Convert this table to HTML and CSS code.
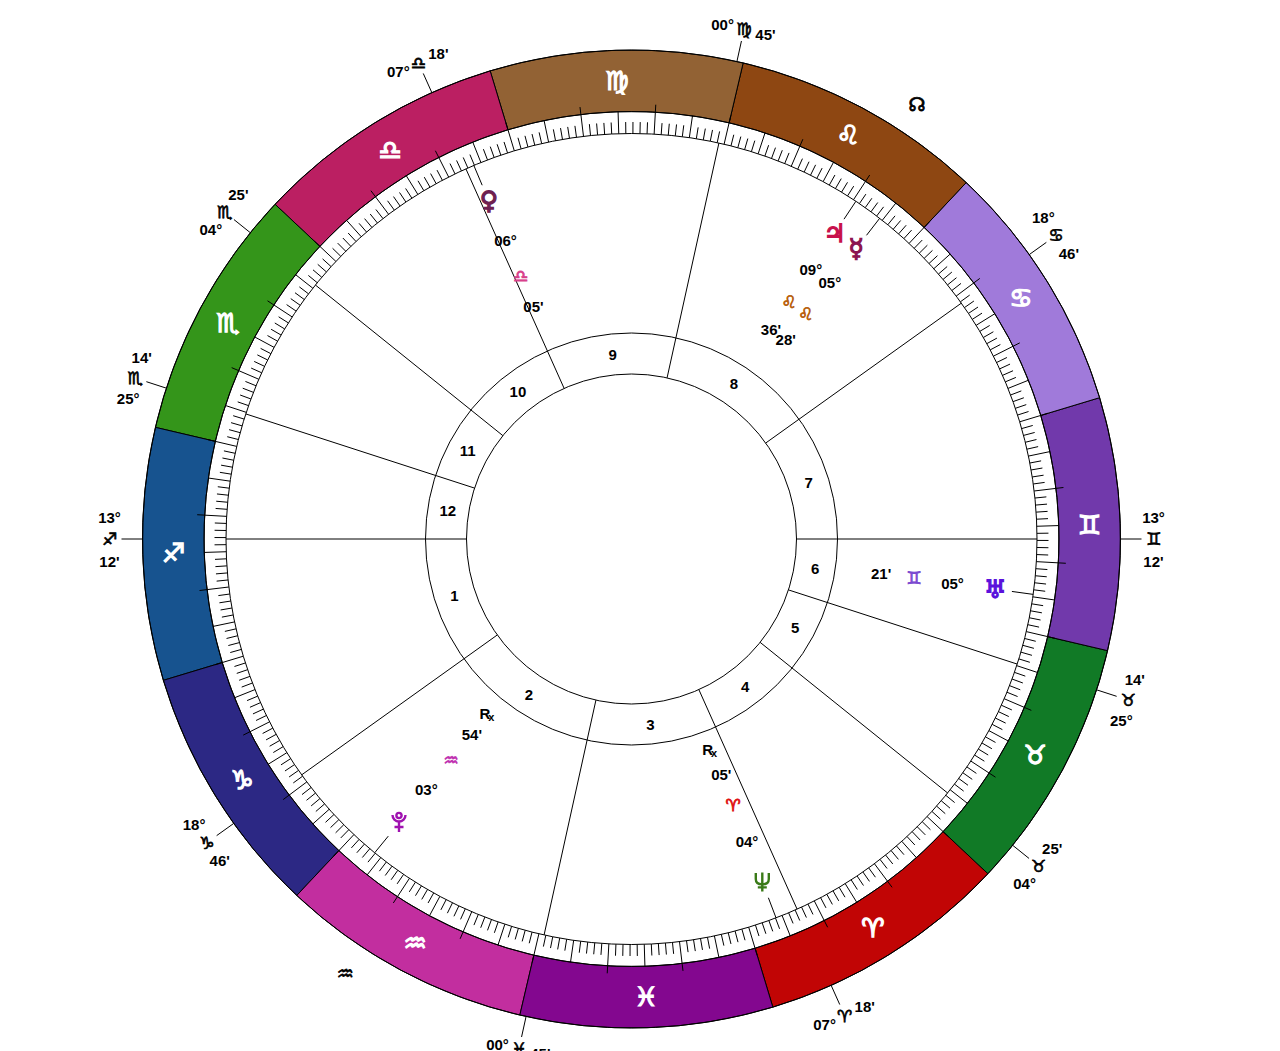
FILE: index.html
```html
<!DOCTYPE html>
<html lang="en">
<head>
<meta charset="utf-8">
<title>Natal chart wheel</title>
<link rel="stylesheet" href="styles.css">
</head>
<body>
<main class="page">
<svg id="chart" class="chart" width="1280" height="1051" viewBox="0 0 1280 1051" xmlns="http://www.w3.org/2000/svg"></svg>
</main>
<script src="script.js"></script>
</body>
</html>
```

FILE: styles.css
```css
html, body {
  margin: 0;
  padding: 0;
  background: #ffffff;
}
.page {
  width: 1280px;
  height: 1051px;
  overflow: hidden;
}
.chart {
  display: block;
  width: 1280px;
  height: 1051px;
}
.band { stroke: #000; stroke-width: 1; }
.aries { fill: #c10505; }
.taurus { fill: #117a26; }
.gemini { fill: #7139ab; }
.cancer { fill: #a07ada; }
.leo { fill: #8e4712; }
.virgo { fill: #926234; }
.libra { fill: #bb1f62; }
.scorpio { fill: #34951a; }
.sagittarius { fill: #17538f; }
.capricorn { fill: #2c2884; }
.aquarius { fill: #c22e9f; }
.pisces { fill: #83078f; }

.ring { fill: none; stroke: #000; stroke-width: 1; }
.tick, .cusp, .pointer { stroke: #000; stroke-width: 1; }

text {
  text-anchor: middle;
  dominant-baseline: central;
}
.lbl {
  font-family: "Liberation Sans", Arial, sans-serif;
  font-weight: bold;
  font-size: 15px;
  fill: #000;
}
.house-num {
  font-family: "Liberation Sans", Arial, sans-serif;
  font-weight: bold;
  font-size: 15px;
  fill: #000;
}
.sym {
  font-family: "DejaVu Sans", sans-serif;
  font-weight: bold;
}
.sign-glyph { font-size: 26px; fill: #ffffff; stroke: #ffffff; stroke-width: 1.3px; }
.cusp-glyph { font-size: 17px; fill: #000; stroke: #000; stroke-width: 0.7px; }
.planet-glyph { font-size: 25px; stroke-width: 1.3px; }
.stack-sign { font-size: 17px; stroke-width: 0.8px; }
.rx {
  font-family: "Liberation Sans", Arial, sans-serif;
  font-weight: bold;
  font-size: 15px;
  fill: #000;
}
.rx-sub { font-size: 11px; }
.node { font-size: 19px; fill: #000; stroke: #000; stroke-width: 0.8px; }
.planet-icon { fill: none; stroke-width: 2.4px; stroke-linecap: butt; }

.c-jup { fill: #c8104c; stroke: #c8104c; }
.c-mer { fill: #8c1450; stroke: #8c1450; }
.c-ven { fill: #6e2050; stroke: #6e2050; }
.c-ura { fill: #5a12dc; stroke: #5a12dc; }
.c-nep { stroke: #3a7a18; }
.c-plu { stroke: #a012b0; }
.t-leo { fill: #b8600c; stroke: #b8600c; }
.t-libra { fill: #d8408a; stroke: #d8408a; }
.t-gemini { fill: #7a48d0; stroke: #7a48d0; }
.t-aries { fill: #e01010; stroke: #e01010; }
.t-aquarius { fill: #c030b0; stroke: #c030b0; }
```

FILE: script.js
```js
(function () {
  var NS = 'http://www.w3.org/2000/svg';
  var svg = document.getElementById('chart');
  var CX = 631.5, CY = 539, ASC = 253.2;
  var R_OUT = 489, R_BAND = 427.5, R_TICK = 405.5, R_H_OUT = 206, R_H_IN = 165;
  var VS = '\uFE0E';
  var SIGNS = ['\u2648', '\u2649', '\u264A', '\u264B', '\u264C', '\u264D', '\u264E', '\u264F', '\u2650', '\u2651', '\u2652', '\u2653'];
  var SIGN_CLS = ['aries', 'taurus', 'gemini', 'cancer', 'leo', 'virgo', 'libra', 'scorpio', 'sagittarius', 'capricorn', 'aquarius', 'pisces'];

  function th(lon) { return 180 + lon - ASC; }
  function pt(t, r) {
    var a = t * Math.PI / 180;
    return [CX + r * Math.cos(a), CY - r * Math.sin(a)];
  }
  function el(tag, attrs, cls, parent) {
    var e = document.createElementNS(NS, tag);
    for (var k in attrs) e.setAttribute(k, attrs[k]);
    if (cls) e.setAttribute('class', cls);
    (parent || svg).appendChild(e);
    return e;
  }
  function group(cls) { return el('g', {}, cls); }
  function rline(t, r1, r2, cls, parent) {
    var a = pt(t, r1), b = pt(t, r2);
    return el('line', { x1: a[0].toFixed(2), y1: a[1].toFixed(2), x2: b[0].toFixed(2), y2: b[1].toFixed(2) }, cls, parent);
  }
  function txt(x, y, s, cls, parent) {
    var e = el('text', { x: x.toFixed(1), y: y.toFixed(1) }, cls, parent);
    e.textContent = s;
    return e;
  }
  function f(p) { return p[0].toFixed(2) + ' ' + p[1].toFixed(2); }

  /* zodiac bands */
  var gBands = group('bands');
  for (var i = 0; i < 12; i++) {
    var t1 = th(30 * i), t2 = th(30 * i + 30);
    var d = 'M ' + f(pt(t1, R_OUT)) +
      ' A ' + R_OUT + ' ' + R_OUT + ' 0 0 0 ' + f(pt(t2, R_OUT)) +
      ' L ' + f(pt(t2, R_BAND)) +
      ' A ' + R_BAND + ' ' + R_BAND + ' 0 0 1 ' + f(pt(t1, R_BAND)) + ' Z';
    el('path', { d: d }, 'band ' + SIGN_CLS[i], gBands);
  }

  /* rings */
  el('circle', { cx: CX, cy: CY, r: R_OUT }, 'ring');
  el('circle', { cx: CX, cy: CY, r: R_BAND }, 'ring');
  el('circle', { cx: CX, cy: CY, r: R_TICK }, 'ring');
  el('circle', { cx: CX, cy: CY, r: R_H_OUT }, 'ring');
  el('circle', { cx: CX, cy: CY, r: R_H_IN }, 'ring');

  /* degree ticks */
  var gTicks = group('ticks');
  for (var dg = 0; dg < 360; dg++) {
    var t = th(dg);
    if (dg % 10 === 0) rline(t, R_TICK, 435, 'tick', gTicks);
    else if (dg % 5 === 0) rline(t, R_TICK, R_BAND, 'tick', gTicks);
    else rline(t, R_TICK, 417, 'tick', gTicks);
  }

  /* sign glyphs in bands */
  var gSigns = group('sign-glyphs');
  for (var j = 0; j < 12; j++) {
    var p = pt(th(30 * j + 15), 458);
    txt(p[0], p[1], SIGNS[j] + VS, 'sym sign-glyph', gSigns);
  }

  /* house cusps */
  var cusps = [
    { lon: 253.2, s: 8, d: '13\u00B0', m: "12'" },
    { lon: 288.767, s: 9, d: '18\u00B0', m: "46'" },
    { lon: 330.75, s: 11, d: '00\u00B0', m: "45'" },
    { lon: 7.3, s: 0, d: '07\u00B0', m: "18'" },
    { lon: 34.417, s: 1, d: '04\u00B0', m: "25'" },
    { lon: 55.233, s: 1, d: '25\u00B0', m: "14'" },
    { lon: 73.2, s: 2, d: '13\u00B0', m: "12'" },
    { lon: 108.767, s: 3, d: '18\u00B0', m: "46'" },
    { lon: 150.75, s: 5, d: '00\u00B0', m: "45'" },
    { lon: 187.3, s: 6, d: '07\u00B0', m: "18'" },
    { lon: 214.417, s: 7, d: '04\u00B0', m: "25'" },
    { lon: 235.233, s: 7, d: '25\u00B0', m: "14'" }
  ];
  var gCusps = group('cusps');
  var gLabels = group('cusp-labels');
  var gHouses = group('house-numbers');
  for (var c = 0; c < 12; c++) {
    var cu = cusps[c];
    var tc = th(cu.lon);
    var tn = th(cusps[(c + 1) % 12].lon);
    if (tn < tc) tn += 360;
    rline(tc, R_H_IN, R_TICK, 'cusp', gCusps);
    rline(tc, R_OUT, 510, 'cusp', gCusps);
    var gp = pt(tc, 522);
    var a = tc * Math.PI / 180;
    var tx = -Math.sin(a), ty = -Math.cos(a);
    var norm = ((tc % 360) + 360) % 360;
    var sgn = (norm >= 180 && norm < 360) ? -1 : 1;
    txt(gp[0], gp[1], SIGNS[cu.s] + VS, 'sym cusp-glyph', gLabels);
    txt(gp[0] + sgn * tx * 22, gp[1] + sgn * ty * 22, cu.d, 'lbl', gLabels);
    txt(gp[0] - sgn * tx * 22, gp[1] - sgn * ty * 22, cu.m, 'lbl', gLabels);
    var hp = pt((tc + tn) / 2, 186);
    txt(hp[0], hp[1], String(c + 1), 'house-num', gHouses);
  }

  /* planets */
  var planets = [
    { lon: 129.6, g: '\u2643', c: 'c-jup', d: '09\u00B0', s: 4, sc: 't-leo', m: "36'" },
    { lon: 125.467, g: '\u263F', c: 'c-mer', d: '05\u00B0', s: 4, sc: 't-leo', m: "28'" },
    { lon: 186.083, g: '\u2640', c: 'c-ven', d: '06\u00B0', s: 6, sc: 't-libra', m: "05'" },
    { lon: 65.35, g: '\u2645', c: 'c-ura', d: '05\u00B0', s: 2, sc: 't-gemini', m: "21'" },
    { lon: 4.083, g: 'neptune', c: 'c-nep', d: '04\u00B0', s: 0, sc: 't-aries', m: "05'", rx: true },
    { lon: 303.9, g: 'pluto', c: 'c-plu', d: '03\u00B0', s: 10, sc: 't-aquarius', m: "54'", rx: true }
  ];
  var gPlanets = group('planets');
  planets.forEach(function (pl) {
    var tp = th(pl.lon);
    rline(tp, 384, R_TICK, 'pointer', gPlanets);
    var p1 = pt(tp, 367), p2 = pt(tp, 324), p3 = pt(tp, 285), p4 = pt(tp, 252), p5 = pt(tp, 225);
    var tr = 'translate(' + p1[0].toFixed(1) + ' ' + p1[1].toFixed(1) + ')';
    if (pl.g === 'pluto') {
      var gi = el('g', { transform: tr }, 'planet-icon ' + pl.c, gPlanets);
      el('title', {}, null, gi).textContent = 'Pluto';
      el('path', { d: 'M -6.5 -8 A 6.5 6.5 0 0 0 6.5 -8' }, null, gi);
      el('circle', { cx: 0, cy: -7.5, r: 2.6 }, null, gi);
      el('path', { d: 'M 0 -1.5 V 9 M -4.5 4 H 4.5' }, null, gi);
    } else if (pl.g === 'neptune') {
      var gn = el('g', { transform: tr }, 'planet-icon ' + pl.c, gPlanets);
      el('title', {}, null, gn).textContent = 'Neptune';
      el('path', { d: 'M -6.5 -9 V -3 Q -6.5 2.5 0 2.5 Q 6.5 2.5 6.5 -3 V -9' }, null, gn);
      el('path', { d: 'M 0 -9.5 V 9.5 M -4.5 5.5 H 4.5' }, null, gn);
    } else {
      txt(p1[0], p1[1], pl.g + VS, 'sym planet-glyph ' + pl.c, gPlanets);
    }
    txt(p2[0], p2[1], pl.d, 'lbl', gPlanets);
    txt(p3[0], p3[1], SIGNS[pl.s] + VS, 'sym stack-sign ' + pl.sc, gPlanets);
    txt(p4[0], p4[1], pl.m, 'lbl', gPlanets);
    if (pl.rx) {
      var r = el('text', { x: (p5[0] - 2).toFixed(1), y: p5[1].toFixed(1) }, 'rx', gPlanets);
      r.appendChild(document.createTextNode('R'));
      var sub = el('tspan', { dx: '-2', dy: '4' }, 'rx-sub', r);
      sub.textContent = 'x';
    }
  });

  /* lunar nodes outside the wheel */
  var n1 = pt(56.7, 520), n2 = pt(236.6, 520);
  txt(n1[0], n1[1], '\u260A', 'sym node', gPlanets);
  txt(n2[0], n2[1], '\u2652' + VS, 'sym node', gPlanets);
})();
```
